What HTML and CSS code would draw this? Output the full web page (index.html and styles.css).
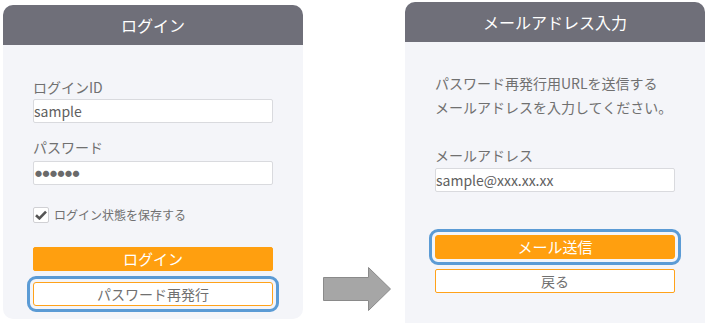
FILE: index.html
```html
<!DOCTYPE html>
<html lang="ja">
<head>
    <meta charset="UTF-8">
    <title>ログイン</title>
    <link rel="stylesheet" href="styles.css">
</head>
<body>
    <div class="flow">
        <div class="card card-login">
            <div class="card-head">ログイン</div>
            <div class="card-body">
                <div class="label">ログインID</div>
                <div class="input">sample</div>
                <div class="label label-pass">パスワード</div>
                <div class="input input-pass">●●●●●●</div>
                <div class="check-row">
                    <span class="check">
                        <svg width="12" height="10" viewBox="0 0 12 10"><path d="M1 5.2 L4.4 8.4 L11 1.6" fill="none" stroke="#555" stroke-width="2.6"/></svg>
                    </span>
                    <span>ログイン状態を保存する</span>
                </div>
                <div class="btn btn-main">ログイン</div>
                <div class="btn btn-sub focus">パスワード再発行</div>
            </div>
        </div>

        <div class="arrow">
            <svg width="70" height="46" viewBox="0 0 70 46">
                <path d="M1.5 11.5 H46.5 V1.5 L68.5 23 L46.5 44.5 V34.5 H1.5 Z" fill="#a6a6a6" stroke="#8a8a8a" stroke-width="1"/>
            </svg>
        </div>

        <div class="card card-mail">
            <div class="card-head">メールアドレス入力</div>
            <div class="card-body">
                <p class="note">パスワード再発行用URLを送信する<br>メールアドレスを入力してください。</p>
                <div class="label">メールアドレス</div>
                <div class="input">sample@xxx.xx.xx</div>
                <div class="btn btn-main btn-send focus">メール送信</div>
                <div class="btn btn-sub">戻る</div>
            </div>
        </div>
    </div>
</body>
</html>
```

FILE: styles.css
```css
* {
    margin: 0;
    padding: 0;
    box-sizing: border-box;
}

body {
    background: #fff;
    font-family: "Noto Sans CJK JP", "Noto Sans", sans-serif;
    color: #707070;
    width: 707px;
    height: 323px;
    overflow: hidden;
}

.flow {
    display: flex;
    align-items: flex-start;
    padding-left: 3px;
}

.card {
    width: 300px;
    background: #f4f5f9;
    border-radius: 10px;
}

.card-login {
    margin-top: 5px;
    height: 314px;
}

.card-mail {
    margin-top: 2px;
    height: 330px;
}

.card-head {
    height: 40px;
    background: #6f6f79;
    color: #fff;
    font-size: 16px;
    line-height: 40px;
    text-align: center;
    border-radius: 10px 10px 0 0;
}

.card-body {
    padding: 32px 30px 0;
}

.card-mail .card-body {
    padding-top: 29px;
}

.label {
    font-size: 14px;
    line-height: 20px;
    margin-bottom: 2px;
}

.label-pass {
    margin-top: 14px;
    margin-bottom: 4px;
}

.input {
    width: 240px;
    height: 24px;
    background: #fff;
    border: 1px solid #d9dade;
    border-radius: 2px;
    font-size: 14px;
    line-height: 22px;
    color: #606060;
}

.input-pass {
    font-size: 7px;
    letter-spacing: 0.5px;
    color: #6a6a6a;
    padding-left: 1px;
}

.check-row {
    display: flex;
    align-items: center;
    gap: 5px;
    margin-top: 22px;
    font-size: 12px;
    line-height: 16px;
}

.check {
    width: 16px;
    height: 16px;
    background: #fff;
    border: 1px solid #d0d0d4;
    border-radius: 2px;
    display: flex;
    justify-content: center;
    align-items: center;
}

.btn {
    width: 240px;
    height: 24px;
    border-radius: 2px;
    text-align: center;
    font-size: 14px;
    line-height: 22px;
}

.btn-main {
    margin-top: 24px;
    background: #ff9f0f;
    border: 1px solid #ff9f0f;
    color: #fff;
    font-size: 15px;
}

.btn-sub {
    margin-top: 11px;
    background: #fff;
    border: 1px solid #ffa21a;
    color: #707070;
}

.focus {
    outline: 3px solid #5b9bd5;
    outline-offset: 3px;
    border-radius: 3px;
}

.arrow {
    width: 102px;
    padding: 266px 0 0 19px;
    flex-shrink: 0;
}

.arrow svg {
    display: block;
}

.note {
    font-size: 14px;
    line-height: 24px;
    margin-bottom: 26px;
}

.card-mail .label {
    margin-bottom: 3px;
}

.btn-send {
    margin-top: 43px;
}

.card-mail .btn-sub {
    margin-top: 10px;
}
```
